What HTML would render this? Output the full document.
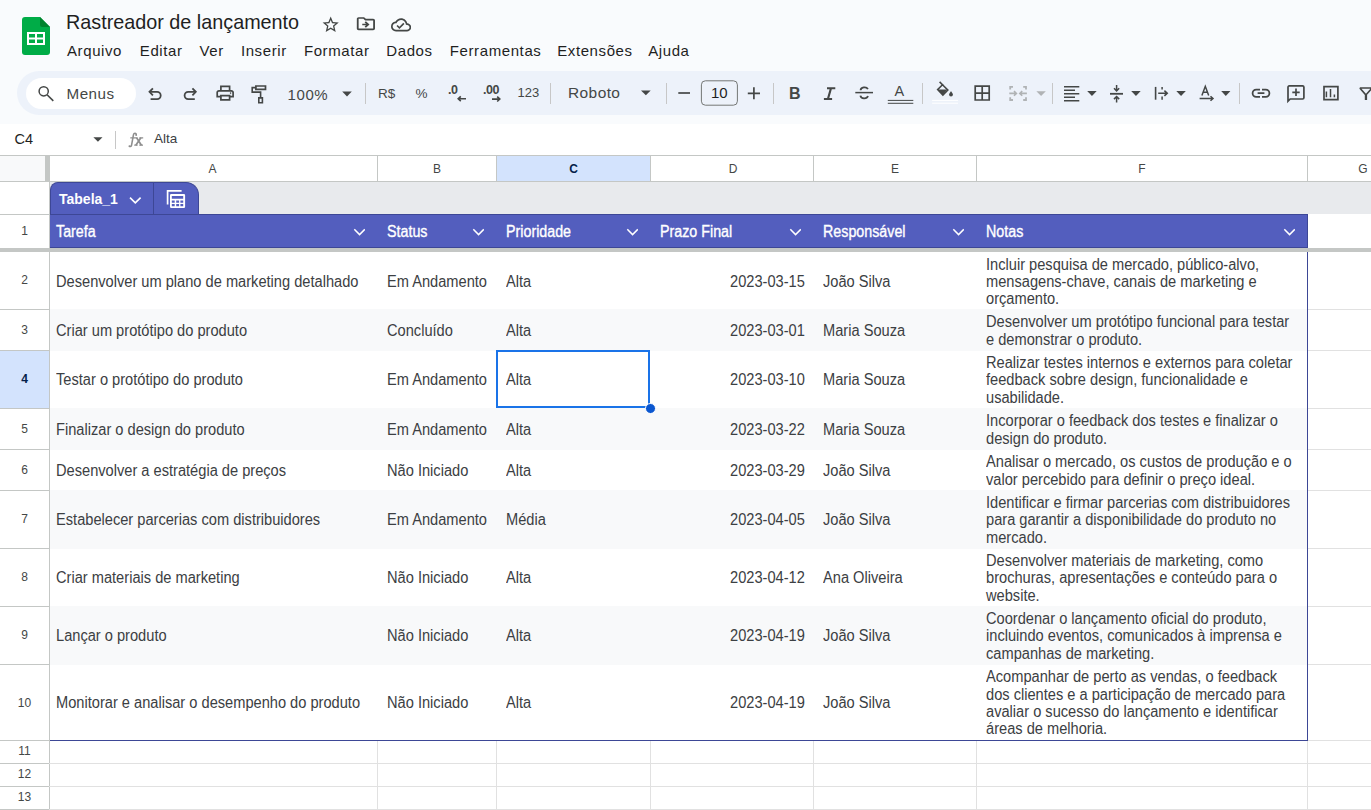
<!DOCTYPE html><html><head><meta charset="utf-8"><style>
*{margin:0;padding:0;box-sizing:border-box}
html,body{width:1371px;height:810px;overflow:hidden}
body{position:relative;background:#fff;font-family:"Liberation Sans",sans-serif;color:#3c4043}
.a{position:absolute}
.top{left:0;top:0;width:1371px;height:124px;background:#f9fbfd}
.menu{top:40.5px;font-size:15px;letter-spacing:0.6px;color:#1f1f1f;white-space:nowrap;line-height:20px}
.tb{left:17px;top:71px;width:1400px;height:44px;border-radius:22px;background:#edf2fa}
.sep{width:1px;height:21px;top:83px;background:#c7c7c7}
.ic{fill:#444746}
.cell{font-size:16px;white-space:nowrap;display:flex;align-items:center;line-height:17.3px;padding-top:2px}
.s{display:inline-block;transform:scaleX(0.914);transform-origin:0 50%}
.sr{display:inline-block;transform:scaleX(0.914);transform-origin:100% 50%}
.hd{font-size:12px;color:#444746;text-align:center;line-height:25px;top:157px;height:25px}
.rn{font-size:12px;color:#444746;text-align:center;left:0;width:49px;display:flex;align-items:center;justify-content:center}
.th{top:215px;height:33px;color:#fff;font-weight:normal;font-size:16px;-webkit-text-stroke:0.35px #fff;letter-spacing:0px;display:flex;align-items:center;white-space:nowrap}
.chev{position:absolute;width:11px;height:8px}
</style></head><body>
<div class="a top"></div>
<svg class="a" style="left:22px;top:17px" width="28" height="38" viewBox="0 0 28 38">
<path d="M3 0H18L28 10V35A3 3 0 0 1 25 38H3A3 3 0 0 1 0 35V3A3 3 0 0 1 3 0Z" fill="#00ac47"/>
<path d="M18 0L28 10H20A2 2 0 0 1 18 8Z" fill="#00832d"/>
<rect x="5" y="15" width="18" height="13" fill="#fff"/>
<rect x="7" y="17" width="6" height="3.5" fill="#00ac47"/><rect x="15" y="17" width="6" height="3.5" fill="#00ac47"/>
<rect x="7" y="22.5" width="6" height="3.5" fill="#00ac47"/><rect x="15" y="22.5" width="6" height="3.5" fill="#00ac47"/>
</svg>
<div class="a" style="left:66px;top:10px;font-size:19.8px;color:#1f1f1f;white-space:nowrap;line-height:24px">Rastreador de lançamento</div>
<svg class="a ic" style="left:321.2px;top:14.7px" width="19.4" height="19.4" viewBox="0 0 24 24"><path d="M22 9.24l-7.19-.62L12 2 9.19 8.63 2 9.24l5.46 4.73L5.82 21 12 17.27 18.18 21l-1.63-7.03L22 9.24zM12 15.4l-3.76 2.27 1-4.28-3.32-2.88 4.38-.38L12 6.1l1.71 4.04 4.38.38-3.32 2.88 1 4.28L12 15.4z"/></svg>
<svg class="a ic" style="left:355.1px;top:14.2px" width="21.8" height="19.4" viewBox="0 0 24 24" preserveAspectRatio="none"><path d="M20 6h-8l-2-2H4c-1.1 0-1.99.9-1.99 2L2 18c0 1.1.9 2 2 2h16c1.1 0 2-.9 2-2V8c0-1.1-.9-2-2-2zm0 12H4V6h5.17l2 2H20v10zm-7.84-6H8v2h4.16l-1.59 1.59L11.99 17 16 13.01 11.99 9l-1.41 1.41L12.16 12z"/></svg>
<svg class="a ic" style="left:391px;top:14.6px" width="20.2" height="19.7" viewBox="0 0 24 24" preserveAspectRatio="none"><path d="M19.35 10.04C18.67 6.59 15.64 4 12 4 9.11 4 6.6 5.64 5.35 8.04 2.34 8.36 0 10.91 0 14c0 3.31 2.69 6 6 6h13c2.76 0 5-2.24 5-5 0-2.64-2.05-4.78-4.65-4.96zM19 18H6c-2.21 0-4-1.79-4-4 0-2.05 1.53-3.76 3.56-3.97l1.07-.11.5-.95C8.08 7.14 9.94 6 12 6c2.62 0 4.88 1.86 5.39 4.43l.3 1.5 1.53.11c1.56.1 2.78 1.41 2.78 2.96 0 1.65-1.35 3-3 3zm-9-3.82l-2.09-2.09L6.5 13.5 10 17l6.01-6.01-1.41-1.41z"/></svg>
<div class="a menu" style="left:67px">Arquivo</div>
<div class="a menu" style="left:139.8px">Editar</div>
<div class="a menu" style="left:199.6px">Ver</div>
<div class="a menu" style="left:240.9px">Inserir</div>
<div class="a menu" style="left:303.9px">Formatar</div>
<div class="a menu" style="left:386.3px">Dados</div>
<div class="a menu" style="left:449.8px">Ferramentas</div>
<div class="a menu" style="left:557.2px">Extensões</div>
<div class="a menu" style="left:648.2px">Ajuda</div>
<div class="a tb"></div>
<div class="a" style="left:26px;top:78px;width:110px;height:31px;border-radius:16px;background:#fff"></div>
<div class="a" style="left:66.5px;top:85px;font-size:15.2px;letter-spacing:0.5px;color:#444746;line-height:17px">Menus</div>
<div class="a" style="left:287.5px;top:85.5px;font-size:15px;color:#444746;line-height:17px;letter-spacing:0.6px">100%</div>
<div class="a" style="left:568px;top:84px;font-size:15.5px;color:#444746;line-height:17px;letter-spacing:0.4px">Roboto</div>
<div class="a sep" style="left:365px"></div>
<div class="a sep" style="left:550px"></div>
<div class="a sep" style="left:666px"></div>
<div class="a sep" style="left:773px"></div>
<div class="a sep" style="left:922px"></div>
<div class="a sep" style="left:1052px"></div>
<div class="a sep" style="left:1239px"></div>
<svg class="a" style="left:0;top:0" width="1371" height="124" viewBox="0 0 1371 124"><circle cx="43.7" cy="91.3" r="4.6" stroke="#444746" stroke-width="1.5" fill="none"/><path d="M47.1 94.7L53.3 100.9" stroke="#444746" stroke-width="1.6" fill="none" stroke-linecap="butt" stroke-linejoin="miter"/><path d="M150 91.85H157.1A3.6 3.6 0 0 1 157.1 99.05H150.6" stroke="#444746" stroke-width="1.8" fill="none" stroke-linecap="butt" stroke-linejoin="miter"/><path d="M152.9 88.4L149.5 91.85L152.9 95.3" stroke="#444746" stroke-width="1.8" fill="none" stroke-linecap="butt" stroke-linejoin="miter"/><path d="M195.3 91.85H188.2A3.6 3.6 0 0 0 188.2 99.05H194.8" stroke="#444746" stroke-width="1.8" fill="none" stroke-linecap="butt" stroke-linejoin="miter"/><path d="M192.4 88.4L195.8 91.85L192.4 95.3" stroke="#444746" stroke-width="1.8" fill="none" stroke-linecap="butt" stroke-linejoin="miter"/><path d="M220.9 90.1V86.3H229.6V90.1" stroke="#444746" stroke-width="1.7" fill="none" stroke-linecap="butt" stroke-linejoin="miter"/><path d="M220.9 96.7H217.2V92.1A1.8 1.8 0 0 1 219 90.9H231.3A1.8 1.8 0 0 1 233.1 92.1V96.7H229.6" stroke="#444746" stroke-width="1.7" fill="none" stroke-linecap="butt" stroke-linejoin="miter"/><path d="M220.9 95.7H229.6V99.8H220.9Z" stroke="#444746" stroke-width="1.7" fill="none" stroke-linecap="butt" stroke-linejoin="miter"/><circle cx="230.6" cy="93.1" r="0.8" fill="#444746"/><path d="M255.9 86H265.5V89.3H255.9Z" stroke="#444746" stroke-width="1.7" fill="none" stroke-linecap="butt" stroke-linejoin="miter"/><path d="M255.9 87.6H252.2V92.1H260.6V97.1" stroke="#444746" stroke-width="1.6" fill="none" stroke-linecap="butt" stroke-linejoin="miter"/><path d="M258.8 97.9H262.4V102.8H258.8Z" stroke="#444746" stroke-width="1.6" fill="none" stroke-linecap="butt" stroke-linejoin="miter"/><path d="M342.2 91.6H351.8L347.0 96.4Z" fill="#444746"/><path d="M641 90.5H650.7L645.85 95.3Z" fill="#444746"/><path d="M1036.4 91.3H1045.8L1041.1 96.0Z" fill="#b0b3b5"/><path d="M1087.2 91.1H1096.7L1091.95 95.9Z" fill="#444746"/><path d="M1131.2 91.1H1140.7L1135.95 95.9Z" fill="#444746"/><path d="M1176.3 91.1H1185.8L1181.05 95.9Z" fill="#444746"/><path d="M1221.2 91.1H1230.4L1225.8000000000002 95.9Z" fill="#444746"/><path d="M466 98.8H458.2M460.8 96.4L458.2 98.8L460.8 101.2" stroke="#444746" stroke-width="1.6" fill="none" stroke-linecap="butt" stroke-linejoin="miter"/><path d="M492 99.1H499.8M497.2 96.7L499.8 99.1L497.2 101.5" stroke="#444746" stroke-width="1.6" fill="none" stroke-linecap="butt" stroke-linejoin="miter"/><path d="M678.3 93H690" stroke="#444746" stroke-width="1.7" fill="none" stroke-linecap="butt" stroke-linejoin="miter"/><path d="M747.8 93.3H760M753.9 87.3V99.3" stroke="#444746" stroke-width="1.7" fill="none" stroke-linecap="butt" stroke-linejoin="miter"/><rect x="701.4" y="80.8" width="36" height="24.4" rx="4" stroke="#747775" stroke-width="1" fill="none"/><path d="M855.3 92.6H873" stroke="#444746" stroke-width="1.5" fill="none" stroke-linecap="butt" stroke-linejoin="miter"/><path d="M860.6 90.3A3.8 3.0 0 0 1 867.9 89.2" stroke="#444746" stroke-width="1.8" fill="none" stroke-linecap="butt" stroke-linejoin="miter"/><path d="M860.4 95.6A3.9 3.2 0 0 0 868 96" stroke="#444746" stroke-width="1.8" fill="none" stroke-linecap="butt" stroke-linejoin="miter"/><path d="M887.8 100.4H913.3M887.8 103.3H913.3" stroke="#444746" stroke-width="1.0" fill="none" stroke-linecap="butt" stroke-linejoin="miter"/><path d="M827 87.3H835.3V89.2H827ZM823.9 98H832.1V99.9H823.9ZM829.6 89.2H831.8L829.3 98H827.1Z" fill="#444746"/><path d="M937.6 89.6L942.5 84.7L947.9 90.1L942.9 95.1Z" stroke="#444746" stroke-width="1.5" fill="none" stroke-linecap="butt" stroke-linejoin="miter"/><path d="M937.6 89.6H947.4L942.9 95.1Z" fill="#444746"/><path d="M939.6 81.9L943 85.3" stroke="#444746" stroke-width="1.6" fill="none" stroke-linecap="butt" stroke-linejoin="miter"/><path d="M951 91.3C951 91.3 949.1 93.5 949.1 94.6A1.9 1.9 0 0 0 952.9 94.6C952.9 93.5 951 91.3 951 91.3Z" fill="#444746"/><path d="M932.1 100.4H958M932.1 103.2H958" stroke="#ffffff" stroke-width="1.0" fill="none" stroke-linecap="butt" stroke-linejoin="miter"/><path d="M975.2 86.2H989.2V100H975.2ZM982.2 86.2V100M975.2 93.1H989.2" stroke="#444746" stroke-width="1.7" fill="none" stroke-linecap="butt" stroke-linejoin="miter"/><path d="M1013 86.8H1010.2V89.6M1010.2 97.2V100H1013M1023.2 86.8H1026V89.6M1026 97.2V100H1023.2" stroke="#b0b3b5" stroke-width="1.8" fill="none" stroke-linecap="butt" stroke-linejoin="miter"/><path d="M1009.3 93.4H1016.4M1014 91L1016.4 93.4L1014 95.8M1026.9 93.4H1019.8M1022.2 91L1019.8 93.4L1022.2 95.8" stroke="#b0b3b5" stroke-width="1.6" fill="none" stroke-linecap="butt" stroke-linejoin="miter"/><path d="M1064 86.7H1079.3M1064 90.3H1075M1064 93.8H1079.3M1064 97.2H1075M1064 100.8H1079.3" stroke="#444746" stroke-width="1.6" fill="none" stroke-linecap="butt" stroke-linejoin="miter"/><path d="M1110 93.8H1123" stroke="#444746" stroke-width="1.8" fill="none" stroke-linecap="butt" stroke-linejoin="miter"/><path d="M1116.6 84.9V90.8M1114 88.3L1116.6 90.9L1119.2 88.3" stroke="#444746" stroke-width="1.5" fill="none" stroke-linecap="butt" stroke-linejoin="miter"/><path d="M1116.6 102.6V96.6M1114 99.1L1116.6 96.5L1119.2 99.1" stroke="#444746" stroke-width="1.5" fill="none" stroke-linecap="butt" stroke-linejoin="miter"/><path d="M1155.6 86.9V99.7" stroke="#444746" stroke-width="1.6" fill="none" stroke-linecap="butt" stroke-linejoin="miter"/><path d="M1162.1 86.9V89.5M1162.1 96.4V99.7" stroke="#444746" stroke-width="1.5" fill="none" stroke-linecap="butt" stroke-linejoin="miter"/><path d="M1158.2 93.2H1167.2M1164.4 90.6L1167.2 93.2L1164.4 95.9" stroke="#444746" stroke-width="1.6" fill="none" stroke-linecap="butt" stroke-linejoin="miter"/><path d="M1201.9 95.4L1205.3 86.3L1208.7 95.4M1203.1 92.2H1207.5" stroke="#444746" stroke-width="1.5" fill="none" stroke-linecap="butt" stroke-linejoin="miter"/><path d="M1199.6 98.5H1212.8M1210.5 96.2L1213 98.5L1210.5 100.8" stroke="#444746" stroke-width="1.5" fill="none" stroke-linecap="butt" stroke-linejoin="miter"/><path d="M1260 89.6H1256.2A3.6 3.6 0 0 0 1256.2 96.8H1260M1262 89.6H1265.8A3.6 3.6 0 0 1 1265.8 96.8H1262M1257.6 93.2H1264.4" stroke="#444746" stroke-width="1.8" fill="none" stroke-linecap="butt" stroke-linejoin="miter"/><path d="M1288 99.1V87.1A1.2 1.2 0 0 1 1289.2 85.9H1302.6A1.3 1.3 0 0 1 1303.9 87.1V97.7A1.3 1.3 0 0 1 1302.6 99H1290.2L1288 101.2Z" stroke="#444746" stroke-width="1.7" fill="none" stroke-linecap="butt" stroke-linejoin="miter"/><path d="M1292.3 92.3H1299.7M1296 88.6V96" stroke="#444746" stroke-width="1.7" fill="none" stroke-linecap="butt" stroke-linejoin="miter"/><path d="M1324 86.7H1337.9V99.6H1324Z" stroke="#444746" stroke-width="1.7" fill="none" stroke-linecap="butt" stroke-linejoin="miter"/><path d="M1326.4 91.5V97.3M1330.5 89V97.3M1334.4 94.4V97.3" stroke="#444746" stroke-width="1.5" fill="none" stroke-linecap="butt" stroke-linejoin="miter"/><path d="M1359.8 88H1372L1366.3 94.6V100M1359.8 88L1365.6 94.6V100" stroke="#444746" stroke-width="1.6" fill="none" stroke-linecap="butt" stroke-linejoin="miter"/></svg>
<div class="a" style="left:378px;top:87px;font-size:13.5px;color:#444746;line-height:14px">R$</div>
<div class="a" style="left:415.5px;top:87px;font-size:13.5px;color:#444746;line-height:14px">%</div>
<div class="a" style="left:448px;top:83px;font-size:12.5px;font-weight:bold;color:#444746;line-height:14px;letter-spacing:-0.5px">.0</div>
<div class="a" style="left:483px;top:83px;font-size:12.5px;font-weight:bold;color:#444746;line-height:14px;letter-spacing:-0.5px">.00</div>
<div class="a" style="left:517.5px;top:86px;font-size:13px;color:#444746;line-height:14px">123</div>
<div class="a" style="left:711px;top:86px;font-size:15px;color:#1f1f1f;line-height:14px">10</div>
<div class="a" style="left:789px;top:86px;font-size:16px;font-weight:bold;color:#444746;line-height:16px">B</div>
<div class="a" style="left:894.5px;top:84px;font-size:14.5px;color:#444746;line-height:14px">A</div>
<svg class="a" style="left:0;top:124px" width="200" height="31" viewBox="0 124 200 31"><path d="M93.4 137.3H102.5L97.95 141.8Z" fill="#444746"/></svg>
<svg class="a" style="left:120px;top:126px" width="30" height="26" viewBox="120 126 30 26"><g stroke="#8e8e8e" fill="none" stroke-linecap="round"><path d="M136.2 134.9C136.4 133.9 135.9 133.2 135 133.2C134.1 133.2 133.6 133.9 133.4 135L131.6 145C131.3 146.5 130.4 146.8 129.5 146.5" stroke-width="1.5"/><path d="M130.3 137.8H137.4M139.3 137.8H143.2M134.2 145.2H137.6M139.3 145.2H143" stroke-width="1.2" stroke-linecap="butt"/><path d="M136.6 137.8L141.4 145.2M140.9 137.8L135.8 145.2" stroke-width="1.7" stroke-linecap="butt"/><circle cx="136.2" cy="134.9" r="0.9" fill="#8e8e8e" stroke="none"/><circle cx="129.4" cy="146.1" r="0.9" fill="#8e8e8e" stroke="none"/></g></svg>
<div class="a" style="left:14.5px;top:130.5px;font-size:14.5px;color:#1f1f1f;line-height:17px">C4</div>
<div class="a" style="left:154px;top:130px;font-size:13.5px;color:#3c4043;line-height:17px">Alta</div>
<div class="a" style="left:115px;top:131px;width:1px;height:18px;background:#c7c7c7"></div>
<div class="a" style="left:0;top:155px;width:1371px;height:1px;background:#c4c7c5"></div>
<div class="a" style="left:0;top:156px;width:45px;height:25px;background:#f8f9fa"></div>
<div class="a" style="left:45px;top:156px;width:4px;height:25px;background:#c4c7c5"></div>
<div class="a" style="left:496px;top:156px;width:154px;height:25px;background:#d3e3fd"></div>
<div class="a hd" style="left:49px;width:327px">A</div>
<div class="a" style="left:377px;top:156px;width:1px;height:25px;background:#c4c7c5"></div>
<div class="a hd" style="left:378px;width:118px">B</div>
<div class="a" style="left:496px;top:156px;width:1px;height:25px;background:#c4c7c5"></div>
<div class="a hd" style="left:497px;width:153px;font-weight:bold;color:#041e49">C</div>
<div class="a" style="left:650px;top:156px;width:1px;height:25px;background:#c4c7c5"></div>
<div class="a hd" style="left:652px;width:162px">D</div>
<div class="a" style="left:813px;top:156px;width:1px;height:25px;background:#c4c7c5"></div>
<div class="a hd" style="left:814px;width:162px">E</div>
<div class="a" style="left:976px;top:156px;width:1px;height:25px;background:#c4c7c5"></div>
<div class="a hd" style="left:977px;width:330px">F</div>
<div class="a" style="left:1307px;top:156px;width:1px;height:25px;background:#c4c7c5"></div>
<div class="a hd" style="left:1308px;width:110px">G</div>
<div class="a" style="left:0;top:181px;width:1371px;height:1px;background:#c4c7c5"></div>
<div class="a" style="left:49px;top:156px;width:1px;height:654px;background:#c4c7c5"></div>
<div class="a" style="left:50px;top:182px;width:1321px;height:32px;background:#e8eaed"></div>
<div class="a" style="left:50px;top:182px;width:149px;height:33px;border-radius:8px 13px 0 0;background:#535ebe;border:1px solid #3d4796;border-bottom:none"></div>
<div class="a" style="left:153px;top:182px;width:1px;height:32px;background:#3d4796"></div>
<div class="a" style="left:59px;top:189px;font-size:14px;font-weight:bold;color:#fff;line-height:20px">Tabela_1</div>
<svg class="a" style="left:120px;top:184px" width="80" height="30" viewBox="120 184 80 30"><path d="M130 197.6L135.3 202.9L140.6 197.6" stroke="#fff" stroke-width="1.6" fill="none"/><path d="M167.6 204.4V190.8H181.6" stroke="#fff" stroke-width="1.7" fill="none"/><path fill="#fff" fill-rule="evenodd" d="M171.2 194.1H183.9A1.2 1.2 0 0 1 185.1 195.3V206.8A1.2 1.2 0 0 1 183.9 208H171.2A1.2 1.2 0 0 1 170 206.8V195.3A1.2 1.2 0 0 1 171.2 194.1ZM171.8 196H183.2V198.7H171.8Z M171.8 200.5H174.7V202.8H171.8Z M176.2 200.5H179.1V202.8H176.2Z M180.4 200.5H183.2V202.8H180.4Z M171.8 204.1H174.7V206.3H171.8Z M176.2 204.1H179.1V206.3H176.2Z M180.4 204.1H183.2V206.3H180.4Z"/></svg>
<div class="a" style="left:0px;top:214px;width:49px;height:1px;background:#c4c7c5"></div>
<div class="a rn" style="top:215px;height:32px">1</div>
<div class="a" style="left:50px;top:214px;width:1258px;height:34px;background:#535ebe;border-top:1px solid #3d4796;border-right:1px solid #3d4796;border-bottom:1px solid #3d4796"></div>
<div class="a th" style="left:56px"><span class="s" style="transform:scaleX(0.892)">Tarefa</span></div>
<svg class="a" style="left:353px;top:227px" width="12" height="10" viewBox="0 0 12 10"><path d="M1.3 2.3L6.55 7.6L11.8 2.3" stroke="#fff" stroke-width="1.5" fill="none"/></svg>
<div class="a th" style="left:387px"><span class="s" style="transform:scaleX(0.892)">Status</span></div>
<svg class="a" style="left:472px;top:227px" width="12" height="10" viewBox="0 0 12 10"><path d="M1.3 2.3L6.55 7.6L11.8 2.3" stroke="#fff" stroke-width="1.5" fill="none"/></svg>
<div class="a th" style="left:506px"><span class="s" style="transform:scaleX(0.892)">Prioridade</span></div>
<svg class="a" style="left:626px;top:227px" width="12" height="10" viewBox="0 0 12 10"><path d="M1.3 2.3L6.55 7.6L11.8 2.3" stroke="#fff" stroke-width="1.5" fill="none"/></svg>
<div class="a th" style="left:660px"><span class="s" style="transform:scaleX(0.892)">Prazo Final</span></div>
<svg class="a" style="left:789px;top:227px" width="12" height="10" viewBox="0 0 12 10"><path d="M1.3 2.3L6.55 7.6L11.8 2.3" stroke="#fff" stroke-width="1.5" fill="none"/></svg>
<div class="a th" style="left:823px"><span class="s" style="transform:scaleX(0.892)">Responsável</span></div>
<svg class="a" style="left:952px;top:227px" width="12" height="10" viewBox="0 0 12 10"><path d="M1.3 2.3L6.55 7.6L11.8 2.3" stroke="#fff" stroke-width="1.5" fill="none"/></svg>
<div class="a th" style="left:986px"><span class="s" style="transform:scaleX(0.892)">Notas</span></div>
<svg class="a" style="left:1283px;top:227px" width="12" height="10" viewBox="0 0 12 10"><path d="M1.3 2.3L6.55 7.6L11.8 2.3" stroke="#fff" stroke-width="1.5" fill="none"/></svg>
<div class="a" style="left:0;top:248px;width:1371px;height:4px;background:#c4c7c5"></div>
<div class="a rn" style="top:251px;height:57px">2</div>
<div class="a" style="left:0px;top:309px;width:49px;height:1px;background:#c4c7c5"></div>
<div class="a" style="left:1308px;top:309px;width:63px;height:1px;background:#e1e1e1"></div>
<div class="a cell" style="left:56px;top:252px;height:57px"><span class="s">Desenvolver um plano de marketing detalhado</span></div>
<div class="a cell" style="left:387px;top:252px;height:57px"><span class="s">Em Andamento</span></div>
<div class="a cell" style="left:506px;top:252px;height:57px"><span class="s">Alta</span></div>
<div class="a cell" style="left:651px;width:154px;top:252px;height:57px;justify-content:flex-end"><span class="sr">2023-03-15</span></div>
<div class="a cell" style="left:823px;top:252px;height:57px"><span class="s">João Silva</span></div>
<div class="a cell" style="left:986px;top:252px;height:57px"><span class="s">Incluir pesquisa de mercado, público-alvo,<br>mensagens-chave, canais de marketing e<br>orçamento.</span></div>
<div class="a" style="left:50px;top:309px;width:1257px;height:42px;background:#f8f9fa"></div>
<div class="a rn" style="top:309px;height:41px">3</div>
<div class="a" style="left:0px;top:350px;width:49px;height:1px;background:#c4c7c5"></div>
<div class="a" style="left:1308px;top:350px;width:63px;height:1px;background:#e1e1e1"></div>
<div class="a cell" style="left:56px;top:309px;height:41px"><span class="s">Criar um protótipo do produto</span></div>
<div class="a cell" style="left:387px;top:309px;height:41px"><span class="s">Concluído</span></div>
<div class="a cell" style="left:506px;top:309px;height:41px"><span class="s">Alta</span></div>
<div class="a cell" style="left:651px;width:154px;top:309px;height:41px;justify-content:flex-end"><span class="sr">2023-03-01</span></div>
<div class="a cell" style="left:823px;top:309px;height:41px"><span class="s">Maria Souza</span></div>
<div class="a cell" style="left:986px;top:309px;height:41px"><span class="s">Desenvolver um protótipo funcional para testar<br>e demonstrar o produto.</span></div>
<div class="a" style="left:0;top:351px;width:49px;height:57px;background:#d3e3fd"></div>
<div class="a rn" style="top:350px;height:58px;font-weight:bold;color:#041e49">4</div>
<div class="a" style="left:0px;top:408px;width:49px;height:1px;background:#c4c7c5"></div>
<div class="a" style="left:1308px;top:408px;width:63px;height:1px;background:#e1e1e1"></div>
<div class="a cell" style="left:56px;top:350px;height:58px"><span class="s">Testar o protótipo do produto</span></div>
<div class="a cell" style="left:387px;top:350px;height:58px"><span class="s">Em Andamento</span></div>
<div class="a cell" style="left:506px;top:350px;height:58px"><span class="s">Alta</span></div>
<div class="a cell" style="left:651px;width:154px;top:350px;height:58px;justify-content:flex-end"><span class="sr">2023-03-10</span></div>
<div class="a cell" style="left:823px;top:350px;height:58px"><span class="s">Maria Souza</span></div>
<div class="a cell" style="left:986px;top:350px;height:58px"><span class="s">Realizar testes internos e externos para coletar<br>feedback sobre design, funcionalidade e<br>usabilidade.</span></div>
<div class="a" style="left:50px;top:408px;width:1257px;height:42px;background:#f8f9fa"></div>
<div class="a rn" style="top:408px;height:41px">5</div>
<div class="a" style="left:0px;top:449px;width:49px;height:1px;background:#c4c7c5"></div>
<div class="a" style="left:1308px;top:449px;width:63px;height:1px;background:#e1e1e1"></div>
<div class="a cell" style="left:56px;top:408px;height:41px"><span class="s">Finalizar o design do produto</span></div>
<div class="a cell" style="left:387px;top:408px;height:41px"><span class="s">Em Andamento</span></div>
<div class="a cell" style="left:506px;top:408px;height:41px"><span class="s">Alta</span></div>
<div class="a cell" style="left:651px;width:154px;top:408px;height:41px;justify-content:flex-end"><span class="sr">2023-03-22</span></div>
<div class="a cell" style="left:823px;top:408px;height:41px"><span class="s">Maria Souza</span></div>
<div class="a cell" style="left:986px;top:408px;height:41px"><span class="s">Incorporar o feedback dos testes e finalizar o<br>design do produto.</span></div>
<div class="a rn" style="top:449px;height:41px">6</div>
<div class="a" style="left:0px;top:490px;width:49px;height:1px;background:#c4c7c5"></div>
<div class="a" style="left:1308px;top:490px;width:63px;height:1px;background:#e1e1e1"></div>
<div class="a cell" style="left:56px;top:449px;height:41px"><span class="s">Desenvolver a estratégia de preços</span></div>
<div class="a cell" style="left:387px;top:449px;height:41px"><span class="s">Não Iniciado</span></div>
<div class="a cell" style="left:506px;top:449px;height:41px"><span class="s">Alta</span></div>
<div class="a cell" style="left:651px;width:154px;top:449px;height:41px;justify-content:flex-end"><span class="sr">2023-03-29</span></div>
<div class="a cell" style="left:823px;top:449px;height:41px"><span class="s">João Silva</span></div>
<div class="a cell" style="left:986px;top:449px;height:41px"><span class="s">Analisar o mercado, os custos de produção e o<br>valor percebido para definir o preço ideal.</span></div>
<div class="a" style="left:50px;top:490px;width:1257px;height:59px;background:#f8f9fa"></div>
<div class="a rn" style="top:490px;height:58px">7</div>
<div class="a" style="left:0px;top:548px;width:49px;height:1px;background:#c4c7c5"></div>
<div class="a" style="left:1308px;top:548px;width:63px;height:1px;background:#e1e1e1"></div>
<div class="a cell" style="left:56px;top:490px;height:58px"><span class="s">Estabelecer parcerias com distribuidores</span></div>
<div class="a cell" style="left:387px;top:490px;height:58px"><span class="s">Em Andamento</span></div>
<div class="a cell" style="left:506px;top:490px;height:58px"><span class="s">Média</span></div>
<div class="a cell" style="left:651px;width:154px;top:490px;height:58px;justify-content:flex-end"><span class="sr">2023-04-05</span></div>
<div class="a cell" style="left:823px;top:490px;height:58px"><span class="s">João Silva</span></div>
<div class="a cell" style="left:986px;top:490px;height:58px"><span class="s">Identificar e firmar parcerias com distribuidores<br>para garantir a disponibilidade do produto no<br>mercado.</span></div>
<div class="a rn" style="top:548px;height:58px">8</div>
<div class="a" style="left:0px;top:606px;width:49px;height:1px;background:#c4c7c5"></div>
<div class="a" style="left:1308px;top:606px;width:63px;height:1px;background:#e1e1e1"></div>
<div class="a cell" style="left:56px;top:548px;height:58px"><span class="s">Criar materiais de marketing</span></div>
<div class="a cell" style="left:387px;top:548px;height:58px"><span class="s">Não Iniciado</span></div>
<div class="a cell" style="left:506px;top:548px;height:58px"><span class="s">Alta</span></div>
<div class="a cell" style="left:651px;width:154px;top:548px;height:58px;justify-content:flex-end"><span class="sr">2023-04-12</span></div>
<div class="a cell" style="left:823px;top:548px;height:58px"><span class="s">Ana Oliveira</span></div>
<div class="a cell" style="left:986px;top:548px;height:58px"><span class="s">Desenvolver materiais de marketing, como<br>brochuras, apresentações e conteúdo para o<br>website.</span></div>
<div class="a" style="left:50px;top:606px;width:1257px;height:59px;background:#f8f9fa"></div>
<div class="a rn" style="top:606px;height:58px">9</div>
<div class="a" style="left:0px;top:664px;width:49px;height:1px;background:#c4c7c5"></div>
<div class="a" style="left:1308px;top:664px;width:63px;height:1px;background:#e1e1e1"></div>
<div class="a cell" style="left:56px;top:606px;height:58px"><span class="s">Lançar o produto</span></div>
<div class="a cell" style="left:387px;top:606px;height:58px"><span class="s">Não Iniciado</span></div>
<div class="a cell" style="left:506px;top:606px;height:58px"><span class="s">Alta</span></div>
<div class="a cell" style="left:651px;width:154px;top:606px;height:58px;justify-content:flex-end"><span class="sr">2023-04-19</span></div>
<div class="a cell" style="left:823px;top:606px;height:58px"><span class="s">João Silva</span></div>
<div class="a cell" style="left:986px;top:606px;height:58px"><span class="s">Coordenar o lançamento oficial do produto,<br>incluindo eventos, comunicados à imprensa e<br>campanhas de marketing.</span></div>
<div class="a rn" style="top:665px;height:76px">10</div>
<div class="a" style="left:0px;top:740px;width:49px;height:1px;background:#c4c7c5"></div>
<div class="a" style="left:1308px;top:740px;width:63px;height:1px;background:#e1e1e1"></div>
<div class="a cell" style="left:56px;top:664px;height:76px"><span class="s">Monitorar e analisar o desempenho do produto</span></div>
<div class="a cell" style="left:387px;top:664px;height:76px"><span class="s">Não Iniciado</span></div>
<div class="a cell" style="left:506px;top:664px;height:76px"><span class="s">Alta</span></div>
<div class="a cell" style="left:651px;width:154px;top:664px;height:76px;justify-content:flex-end"><span class="sr">2023-04-19</span></div>
<div class="a cell" style="left:823px;top:664px;height:76px"><span class="s">João Silva</span></div>
<div class="a cell" style="left:986px;top:664px;height:76px"><span class="s">Acompanhar de perto as vendas, o feedback<br>dos clientes e a participação de mercado para<br>avaliar o sucesso do lançamento e identificar<br>áreas de melhoria.</span></div>
<div class="a" style="left:50px;top:740px;width:1258px;height:1px;background:#3d4796"></div>
<div class="a" style="left:1307px;top:252px;width:1px;height:488px;background:#3d4796"></div>
<div class="a rn" style="top:740px;height:22px">11</div>
<div class="a" style="left:0px;top:763px;width:1371px;height:1px;background:#e1e1e1"></div>
<div class="a" style="left:0px;top:763px;width:49px;height:1px;background:#c4c7c5"></div>
<div class="a rn" style="top:763px;height:22px">12</div>
<div class="a" style="left:0px;top:786px;width:1371px;height:1px;background:#e1e1e1"></div>
<div class="a" style="left:0px;top:786px;width:49px;height:1px;background:#c4c7c5"></div>
<div class="a rn" style="top:786px;height:22px">13</div>
<div class="a" style="left:0px;top:809px;width:1371px;height:1px;background:#e1e1e1"></div>
<div class="a" style="left:0px;top:809px;width:49px;height:1px;background:#c4c7c5"></div>
<div class="a" style="left:377px;top:741px;width:1px;height:69px;background:#e1e1e1"></div>
<div class="a" style="left:496px;top:741px;width:1px;height:69px;background:#e1e1e1"></div>
<div class="a" style="left:650px;top:741px;width:1px;height:69px;background:#e1e1e1"></div>
<div class="a" style="left:813px;top:741px;width:1px;height:69px;background:#e1e1e1"></div>
<div class="a" style="left:976px;top:741px;width:1px;height:69px;background:#e1e1e1"></div>
<div class="a" style="left:1307px;top:741px;width:1px;height:69px;background:#e1e1e1"></div>
<div class="a" style="left:496px;top:350px;width:154px;height:58px;border:2px solid #1a73e8"></div>
<div class="a" style="left:645px;top:403px;width:11px;height:11px;border-radius:50%;background:#0b57d0;border:1px solid #fff"></div>
</body></html>
